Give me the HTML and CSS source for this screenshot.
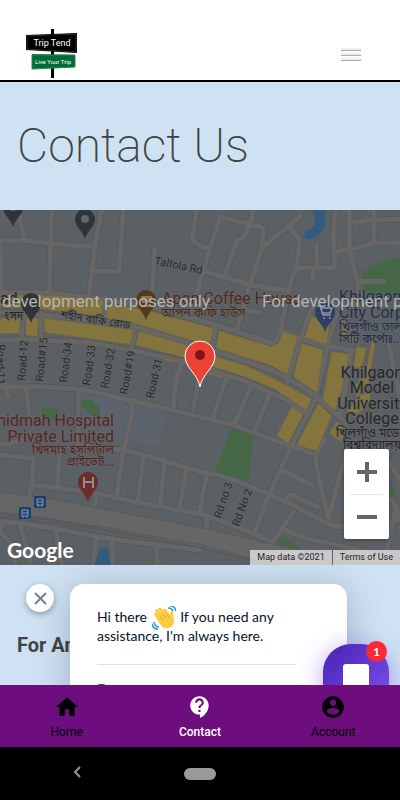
FILE: index.html
```html
<!DOCTYPE html>
<html lang="en">
<head>
  <meta charset="UTF-8">
  <meta name="viewport" content="width=device-width, initial-scale=1">
  <title>Contact Us - Trip Tend</title>
  <link rel="stylesheet" href="styles.css">
</head>
<body>

<header class="header">
  <a class="logo" href="#" aria-label="Trip Tend">
    <svg width="52" height="50" viewBox="0 0 52 50">
      <path d="M25 0h3v49h-3z" fill="#000"/>
      <path d="M0 6l51-2v20L0 21z" fill="#000"/>
      <path d="M1 7l49-2v18L1 20z" fill="none" stroke="#2a2a2a"/>
      <path d="M6 25l43 1v12L6 40z" fill="#006b35"/>
      <path d="M6 26l43 0v12L6 40z" fill="none" stroke="#1f8a4c"/>
      <text x="26" y="17" class="logo-top">Trip Tend</text>
      <text x="27" y="35" class="logo-bottom">Live Your Trip</text>
    </svg>
  </a>
  <button class="menu" aria-label="Menu"><span></span><span></span><span></span></button>
</header>

<main>
  <section class="hero">
    <h1>Contact Us</h1>
  </section>

  <section class="map">
    <!-- streets and blocks -->
    <svg class="map-layer" viewBox="0 0 1200 1065" preserveAspectRatio="xMidYMid slice">
      <defs>
        <g id="streets">
          <path d="M0 92L65 90 130 98 285 112M155 0L148 245M55 0L72 90M0 95L3 245M305 0L285 105 268 250M370 0L358 175Q357 185 345 185L280 182M465 115L455 250M590 0L577 82Q578 102 625 115L600 107"/>
          <path d="M760 0L750 45 728 84 710 92 675 195M580 290L600 215 660 20 780 50Q795 60 790 75L785 115 750 225 710 360M785 115L902 18M868 52L900 90 890 165 870 225 840 365Q830 400 812 399L750 380"/>
          <path d="M618 185L750 225 870 244M710 297L780 308M890 173H1005L1000 85 1005 0M950 105V173M938 173V208M1005 125L1060 115 1120 100 1200 98M1048 0V115L1078 240 1090 280M1048 38L1120 30 1200 28M1120 0L1122 98M1078 214H1150M1078 240L1060 300"/>
          <path d="M0 248L140 248 310 268 460 292 640 343 812 398M0 306L140 316 318 335 420 355 640 422 810 478 900 525 960 570 1040 640M0 390H110L270 398 400 422 555 455 640 482 740 515 860 570 920 612M68 310L65 390M125 310L122 390M316 265L310 340M405 360L395 415M545 460L525 530M647 350L636 420"/>
          <path d="M950 260L918 340 895 400 868 500 845 550M850 365L905 388 980 408 1080 425M1010 310L985 400 962 500 945 570 875 705 805 860 765 965M1055 420L1035 540 1020 620M1090 425L1080 520M1165 400L1200 560"/>
          <path d="M0 530L120 530 240 537 385 570 600 620 700 645 850 700 950 735M15 520L25 560M235 540V700M80 540L88 625M385 570Q400 590 395 620L372 715M530 490L520 590M0 735L100 745 95 825 78 900M0 705L70 690M180 720L172 830M100 825L180 835 290 850 400 875 600 912M240 705L370 720 450 740 600 785M370 720L350 860M430 740L415 870M495 750L480 885M560 775L538 900M290 850L283 900"/>
          <path d="M0 935L60 940 160 955 290 980 470 1005 600 1020M60 940L92 1065M0 965L28 995 48 1065M0 955L20 935M165 955L185 1065M288 980L280 1065M335 985L340 1065M470 1005L472 1065"/>
          <path d="M600 475L580 600M680 500L640 620M755 525L705 640M810 550L765 660M600 785L660 795 740 825 870 880 980 940Q1010 955 1080 950L1200 930M845 780L935 824M852 875Q862 850 880 856L952 890M945 735L950 775 985 925M1040 720L985 925M975 685L945 740M880 905L810 1010M600 910L750 965 820 1000M843 955L920 985 1000 1003 1120 1030M620 790L600 900M1130 700L1200 810M620 930V960M1170 860L1200 920M1190 890L1150 1065"/>
        </g>
      </defs>
      <rect width="1200" height="1065" class="land"/>
      <path class="campus" d="M240 545L385 575 505 605 470 705 240 685z"/>
      <use href="#streets" class="street-edge"/>
      <use href="#streets" class="street"/>
      <g class="yellow">
        <path d="M0 255L180 258 310 272 303 320 130 297 0 290zM325 283L440 300 640 355 628 407 420 345 318 325zM0 322L60 325 57 370H0zM78 322L115 325 112 380 78 375zM133 324L400 360 390 403 133 367zM415 363L480 382 555 405 640 437 740 468 810 500 935 566 918 600 825 537 735 500 640 470 555 443 408 405z"/>
        <path d="M657 362L815 410 835 400 848 368 893 378 862 493 810 465 648 415zM490 445L535 453 530 457 490 449zM625 487L670 499 665 502 625 491z"/>
        <path d="M935 320L990 335 980 402 913 383zM905 400L970 420 950 548 880 500zM995 425L1048 432 1025 540 1005 602 968 568zM1070 410L1100 415 1085 470 1060 475zM1115 395L1125 400 1105 520 1070 560 1060 530 1095 500zM1025 330L1060 350 1080 400 1025 385zM1080 555L1110 550 1110 580 1075 610 1040 605z"/>
        <path d="M875 590L910 612 865 700 830 678zM955 580L995 618 950 722 890 705zM1010 635L1035 650 1025 695 988 670z"/>
      </g>
      <g class="park">
        <path d="M1085 185L1170 145H1200V250H1090zM125 592H175L170 635 125 620zM245 570H275L298 595V620L262 610 258 595 245 590zM695 655L760 677 745 812 645 787zM845 980L898 1010V1020L825 1015zM1168 815L1190 855 1168 865z"/>
      </g>
      <path class="street" d="M1078 214H1150"/>
      <path class="water" d="M940 0H978L975 50 950 80 925 90 908 80 915 65 945 45zM300 1015H322L332 1065H283z"/>
      <path class="highway-edge" d="M0 877L130 892 285 922 600 982 780 1025 980 1065"/>
      <path class="highway" d="M0 877L130 892 285 922 600 982 780 1025 980 1065"/>
      <path class="rail" d="M0 920L300 958 600 1012 800 1065M0 912L300 950 600 1004 830 1065"/>
    </svg>

    <!-- place names and pins -->
    <svg class="map-layer" viewBox="0 0 400 355" preserveAspectRatio="xMidYMid slice">
      <defs>
        <path id="pin" d="M0 0C-2-8-10-12-10-20A10 10 0 0 1 10-20C10-12 2-8 0 0z"/>
      </defs>
      <g fill="#303437">
        <use href="#pin" x="13" y="17"/><use href="#pin" x="85" y="29"/><use href="#pin" x="31" y="113"/>
      </g>
      <circle cx="85" cy="9" r="4" fill="#65686a"/><circle cx="13" cy="-3" r="4" fill="#65686a"/>
      <use href="#pin" x="146" y="110" fill="#54391a"/>
      <path d="M141 86h11v3h-2v4h-8zM142 95h9v2h-9z" fill="#8a7752"/>
      <use href="#pin" x="325" y="122" fill="#2d3f63"/>
      <path d="M317 96h3l3 9h8M321 98h11l-2 5h-8zM324 107v2M330 107v2" fill="none" stroke="#8997aa" stroke-width="1.500"/>
      <use href="#pin" x="88" y="292" fill="#692e2a"/>
      <path d="M84 267v11M93 267v11M84 272h9" fill="none" stroke="#928a89" stroke-width="2"/>
      <g fill="#1d3f6b">
        <rect x="34" y="286" width="12" height="12" rx="1"/><rect x="19" y="297" width="12" height="12" rx="1"/>
      </g>
      <path d="M37 289h6v6h-6zM37 292h6M38 295v2M42 295v2M22 300h6v6h-6zM22 303h6M23 306v2M27 306v2" fill="none" stroke="#8c9bad"/>

      <g class="road-name">
        <text transform="translate(154 54) rotate(12)">Taltola Rd</text>
        <text transform="translate(60 108) rotate(9)" class="bn">শহীদ বাকি রোড</text>
        <text transform="translate(-3 134) rotate(90)">Road-11</text>
        <text transform="translate(25 171) rotate(-86)">Road-12</text>
        <text transform="translate(43 172) rotate(-84)">Road#15</text>
        <text transform="translate(67 173) rotate(-83)">Road-34</text>
        <text transform="translate(90 176) rotate(-82)">Road-33</text>
        <text transform="translate(108 179) rotate(-80)">Road-32</text>
        <text transform="translate(127 185) rotate(-79)">Road#19</text>
        <text transform="translate(153 189) rotate(-76)">Road-31</text>
        <text transform="translate(221 309) rotate(-72)">Rd no 3</text>
        <text transform="translate(239 317) rotate(-70)">Rd No 2</text>
      </g>
      <text x="0" y="94" class="place dark">ad</text>
      <text x="-2" y="110" class="bn dark">ংসদ</text>
      <text x="162" y="94" class="place brown">Apon Coffee House</text>
      <text x="161" y="107" class="bn brown">আপন কফি হাউস</text>
      <g class="blue">
        <text x="339" y="92" class="place">Khilgaon</text>
        <text x="339" y="108" class="place">City Corp</text>
        <text x="339" y="121" class="bn">খিলগাঁও তাল</text>
        <text x="339" y="133" class="bn">সিটি কর্পোঃ...</text>
      </g>
      <g class="dark mid">
        <text x="372" y="168" class="place">Khilgaon</text>
        <text x="372" y="183" class="place">Model</text>
        <text x="372" y="199" class="place">University</text>
        <text x="372" y="214" class="place">College</text>
        <text x="372" y="227" class="bn">খিলগাঁও মডেল</text>
        <text x="372" y="239" class="bn">বিশ্ববিদ্যালয়</text>
      </g>
      <g class="red end">
        <text x="114" y="216" class="place">Khidmah Hospital</text>
        <text x="114" y="232" class="place">Private Limited</text>
        <text x="114" y="244" class="bn">খিদমাহ হসপিটাল</text>
        <text x="114" y="256" class="bn">প্রাইভেট...</text>
      </g>
      <text x="210" y="97" class="watermark end">For development purposes only</text>
      <text x="262" y="97" class="watermark">For development purposes only</text>

      <path d="M200 177C198 164 185 158 185 146A15 15 0 0 1 215 146C215 158 202 164 200 177z" fill="#ea4335" stroke="#fff" stroke-width="1"/>
      <circle cx="200" cy="145" r="5" fill="#811411"/>
    </svg>

    <div class="zoom">
      <button aria-label="Zoom in"><svg width="20" height="20"><path d="M10 0v20M0 10h20"/></svg></button>
      <button aria-label="Zoom out"><svg width="20" height="20"><path d="M0 10h20"/></svg></button>
    </div>
    <a class="google" href="#">Google</a>
    <div class="credits">
      <span>Map data ©2021</span>
      <a href="#">Terms of Use</a>
    </div>
  </section>

  <section class="contact">
    <h2>For Any</h2>

    <div class="chat">
      <button class="chat-close" aria-label="Close">
        <svg width="13" height="13"><path d="M1 1l11 11M12 1L1 12"/></svg>
      </button>
      <div class="chat-card">
        <p>Hi there
          <svg class="wave" width="24" height="24" viewBox="0 0 24 24">
            <path d="M2 8Q2 6 4 7L8 11 3 5Q3 3 5 3L11 9 6 3Q7 1 9 2L15 9 11 4Q12 2 14 3L18 9 19 5Q21 4 21 7L22 14Q22 21 16 22 11 23 8 18z" fill="#ffc83d"/>
            <path d="M8 11l3 3M11 9l3 3M15 9l2 2" fill="none" stroke="#e8a21d"/>
            <path d="M16 2q4 0 5 3M18 0q5 0 6 5M2 16q0 4 5 5M0 18q1 5 6 5" fill="none" stroke="#2b9be0" stroke-width="1.500"/>
          </svg>
          If you need any assistance, I'm always here.</p>
        <input type="text" aria-label="Message" placeholder="Enter a message">
      </div>
      <button class="chat-toggle" aria-label="Open chat">
        <svg width="26" height="26"><rect width="26" height="26" rx="3" fill="#fff"/></svg>
        <span class="badge">1</span>
      </button>
    </div>
  </section>
</main>

<nav class="tabs">
  <a href="#">
    <svg width="26" height="26" viewBox="0 0 24 24"><path d="M10 20v-6h4v6h5v-8h3L12 3 2 12h3v8z"/></svg>
    Home
  </a>
  <a href="#" class="active">
    <svg width="26" height="26" viewBox="0 0 24 24"><path d="M11.500 2C6.810 2 3 5.810 3 10.500S6.810 19 11.500 19h.5v3c4.860-2.340 8-7 8-11.500C20 5.810 16.190 2 11.500 2zm1 14.500h-2v-2h2v2zm0-3.500h-2c0-3.250 3-3 3-5 0-1.100-.9-2-2-2s-2 .9-2 2h-2c0-2.210 1.790-4 4-4s4 1.790 4 4c0 2.500-3 2.750-3 5z"/></svg>
    Contact
  </a>
  <a href="#">
    <svg width="26" height="26" viewBox="0 0 24 24"><path d="M12 2C6.480 2 2 6.480 2 12s4.480 10 10 10 10-4.480 10-10S17.520 2 12 2zm0 3c1.660 0 3 1.340 3 3s-1.340 3-3 3-3-1.340-3-3 1.340-3 3-3zm0 14.200c-2.500 0-4.710-1.280-6-3.220.03-1.990 4-3.080 6-3.080 1.990 0 5.970 1.090 6 3.080-1.290 1.940-3.500 3.220-6 3.220z"/></svg>
    Account
  </a>
</nav>

<div class="system">
  <button class="back" aria-label="Back"><svg width="8" height="12"><path d="M7 1L2 6l5 5"/></svg></button>
  <button class="pill" aria-label="Home screen"></button>
</div>

</body>
</html>
```

FILE: styles.css
```css
*{
  box-sizing: border-box;
}

body{
  display: flex;
  flex-direction: column;
  height: 100vh;
  margin: 0;
  font-family: Roboto, "Noto Sans", sans-serif;
  color: #434343;
  background: #cfe2f3;
}

button{
  padding: 0;
  border: 0;
  background: none;
}

a{
  color: inherit;
  text-decoration: none;
}

/* header */
.header{
  display: flex;
  flex: none;
  justify-content: space-between;
  align-items: flex-end;
  height: 82px;
  padding: 0 39px 0 26px;
  background: #fff;
  border-bottom: 2px solid #000;
}

.logo svg{
  display: block;
  margin-bottom: 1px;
}

.logo text{
  fill: #fff;
  text-anchor: middle;
}

.logo-top{
  font-size: 9px;
}

.logo-bottom{
  font-size: 6px;
}

.menu{
  display: grid;
  gap: 2px;
  width: 20px;
  margin-bottom: 19px;
}

.menu span{
  height: 3px;
  border-bottom: 1px solid #aaa;
  background: #eee;
}

/* content */
main{
  display: flex;
  flex: 1;
  flex-direction: column;
  min-height: 0;
  overflow: hidden;
}

.hero{
  flex: none;
  padding: 36px 17px;
}

h1{
  margin: 0;
  font-size: 48px;
  font-weight: 200;
  line-height: 56px;
}

/* map */
.map{
  position: relative;
  flex: none;
  height: 355px;
  overflow: hidden;
  background: #5b6064;
}

.map-layer{
  position: absolute;
  inset: 0;
  width: 100%;
  height: 100%;
}

.land{
  fill: #5b6064;
}

.campus{
  fill: #5c636d;
}

.street-edge, .street, .highway-edge, .highway, .rail{
  fill: none;
  stroke-linecap: round;
  stroke-linejoin: round;
}

.street-edge{
  stroke: #575757;
  stroke-width: 19px;
}

.street{
  stroke: #666;
  stroke-width: 15px;
}

.highway-edge{
  stroke: #575757;
  stroke-width: 60px;
}

.highway{
  stroke: #666;
  stroke-width: 56px;
}

.rail{
  stroke: #55585c;
  stroke-width: 3px;
}

.yellow{
  fill: #84743e;
  stroke: #756a42;
  stroke-width: 2px;
}

.park{
  fill: #456746;
}

.water{
  fill: #325b7d;
}

.map text{
  paint-order: stroke;
  stroke: rgba(102, 102, 102, .6);
  stroke-width: 2px;
  stroke-linejoin: round;
}

.road-name{
  font-size: 11px;
  fill: #292b2d;
}

.place{
  font-size: 16px;
}

.bn{
  font-family: "Noto Sans Bengali", "Noto Sans", sans-serif;
  font-size: 12px;
}

.road-name .bn{
  font-size: 11px;
}

.dark{
  fill: #25282a;
}

.brown{
  fill: #4d2e1b;
}

.blue{
  fill: #202f50;
}

.red{
  fill: #552724;
}

.mid{
  text-anchor: middle;
}

.end{
  text-anchor: end;
}

.map .watermark{
  font-size: 17px;
  fill: #b5b5b5;
  stroke: none;
}

.zoom{
  position: absolute;
  right: 11px;
  bottom: 26px;
  display: flex;
  flex-direction: column;
  width: 45px;
  padding: 0 6px;
  background: #fff;
  border-radius: 2px;
  box-shadow: 0 1px 4px rgba(0, 0, 0, .3);
}

.zoom button{
  display: grid;
  place-items: center;
  height: 45px;
}

.zoom button + button{
  border-top: 1px solid #e6e6e6;
}

.zoom path{
  stroke: #666;
  stroke-width: 4px;
}

.google{
  position: absolute;
  left: 7px;
  bottom: 1px;
  font: 700 21px/28px Lato, sans-serif;
  color: #fff;
}

.credits{
  position: absolute;
  right: 0;
  bottom: 0;
  display: flex;
  gap: 1px;
  font-size: 9px;
  line-height: 15px;
  color: #222;
}

.credits span, .credits a{
  padding: 0 7px;
  background: rgba(245, 245, 245, .7);
}

/* contact block with the chat widget over it */
.contact{
  position: relative;
  flex: 1;
  min-height: 0;
  padding: 68px 17px 0;
  overflow: hidden;
}

h2{
  margin: 0;
  font-size: 20px;
  line-height: 24px;
}

.chat{
  position: absolute;
  inset: 19px 11px auto 26px;
  display: flex;
  align-items: flex-start;
  gap: 16px;
}

.chat-close{
  display: grid;
  flex: none;
  place-items: center;
  width: 28px;
  height: 28px;
  border-radius: 50%;
  background: #fff;
  box-shadow: 0 2px 6px rgba(0, 0, 0, .35);
}

.chat-close path{
  stroke: #76819f;
  stroke-width: 2px;
}

.chat-card{
  flex: 1;
  margin-right: 42px;
  padding: 24px 51px 24px 27px;
  border-radius: 14px;
  background: #fff;
  box-shadow: 0 4px 36px rgba(0, 18, 46, .24);
}

.chat-card p{
  margin: 0 -10px 0 0;
  padding-bottom: 19px;
  font: 14px/18px Lato, sans-serif;
  color: #06132b;
}

.wave{
  margin: -3px 1px;
  vertical-align: middle;
}

.chat-card input{
  display: block;
  width: 100%;
  padding: 15px 0;
  border: 0;
  border-top: 1px solid #dbdfe6;
  font: 14px/18px Lato, sans-serif;
}

.chat-card input::placeholder{
  color: #5d3b86;
}

.chat-toggle{
  position: absolute;
  top: 60px;
  right: 0;
  display: grid;
  place-items: center;
  width: 66px;
  height: 66px;
  border-radius: 28px;
  background: linear-gradient(135deg, #4820b5, #7c55ee);
  box-shadow: 0 4px 24px rgba(73, 27, 223, .4);
}

.badge{
  position: absolute;
  top: -3px;
  right: 2px;
  width: 21px;
  border-radius: 50%;
  background: #fb2a34;
  font: 700 12px/21px Lato, sans-serif;
  color: #fff;
}

/* bottom bars */
.tabs{
  display: grid;
  flex: none;
  grid-template-columns: repeat(3, 1fr);
  height: 62px;
  background: #6e0d7d;
}

.tabs a{
  display: flex;
  flex-direction: column;
  align-items: center;
  gap: 4px;
  padding-top: 9px;
  font-size: 12px;
  line-height: 16px;
  color: #000;
}

.tabs svg{
  fill: currentColor;
}

.tabs .active{
  font-weight: 500;
  color: #fff;
}

.system{
  display: grid;
  flex: none;
  grid-template-columns: 1fr 32px 1fr;
  align-items: center;
  height: 53px;
  background: #000;
}

.back{
  justify-self: center;
  margin-right: 30px;
}

.back path{
  fill: none;
  stroke: #999;
  stroke-width: 2px;
}

.pill{
  height: 12px;
  border-radius: 6px;
  background: #999;
}
```
